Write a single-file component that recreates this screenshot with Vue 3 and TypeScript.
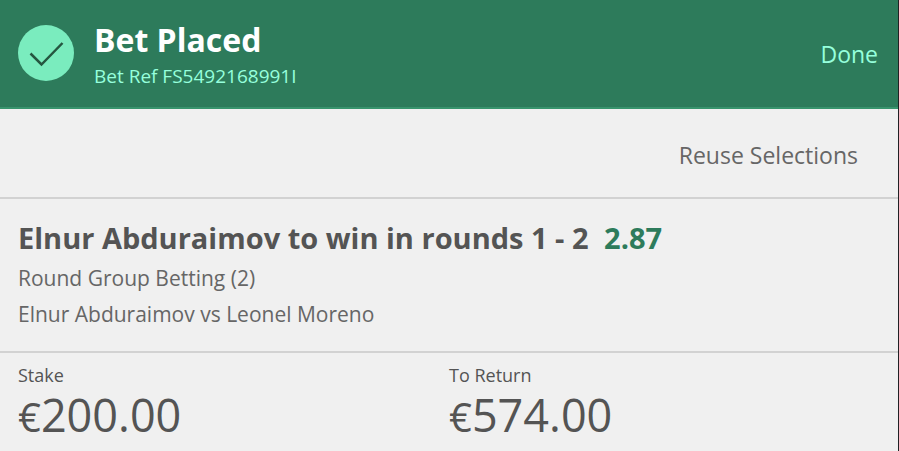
<script setup lang="ts">
interface Total {
  label: string
  currency: string
  amount: string
}

const reference = 'FS5492168991I'
const totals: Total[] = [
  { label: 'Stake', currency: '€', amount: '200.00' },
  { label: 'To Return', currency: '€', amount: '574.00' },
]
</script>

<template>
  <main class="receipt">
    <header class="banner">
      <svg class="tick" viewBox="0 0 56 56" aria-hidden="true">
        <circle cx="28" cy="28" r="28" fill="#7aecbe" />
        <path d="M12.500 28.500L23.500 39.500L44.500 18" fill="none" stroke="#255640" stroke-width="2.500" />
      </svg>
      <div class="heading">
        <h1>Bet Placed</h1>
        <p>Bet Ref {{ reference }}</p>
      </div>
      <button class="done" type="button">Done</button>
    </header>
    <div class="actions">
      <button class="reuse" type="button">Reuse Selections</button>
    </div>
    <section class="selection">
      <h2>Elnur Abduraimov to win in rounds 1 - 2 <span class="odds">2.87</span></h2>
      <p>Round Group Betting (2)</p>
      <p>Elnur Abduraimov vs Leonel Moreno</p>
    </section>
    <dl class="totals">
      <div v-for="total in totals" :key="total.label">
        <dt>{{ total.label }}</dt>
        <dd><span class="currency">{{ total.currency }}</span>{{ total.amount }}</dd>
      </div>
    </dl>
  </main>
</template>

<style>
body {
  background: #f0f0f0;
}
</style>

<style scoped>
.receipt {
  box-sizing: border-box;
  min-height: 100vh;
  border-right: 1px solid #202124;
  font-family: "Open Sans", "Noto Sans", sans-serif;
  color: #545454;
}
h1, h2, p, dl, dt, dd {
  margin: 0;
}
button {
  border: 0;
  padding: 0;
  background: none;
  font: inherit;
  cursor: pointer;
}
.banner {
  display: flex;
  align-items: center;
  box-sizing: border-box;
  height: 109px;
  padding: 0 20px 1px 18px;
  background: #2d7b5b;
  border-bottom: 2px solid #38946d;
}
.tick {
  width: 56px;
  height: 56px;
  margin-right: 20px;
}
.heading {
  flex: 1;
  padding-top: 6px;
}
h1 {
  color: #fff;
  font-size: 32px;
  line-height: 40px;
}
.heading p {
  color: #96ffdc;
  font-size: 19px;
  line-height: 32px;
}
.done {
  padding-top: 2px;
  color: #96ffdc;
  font-size: 23px;
}
.actions {
  display: flex;
  justify-content: flex-end;
  align-items: center;
  height: 88px;
  padding: 4px 40px 0 18px;
  box-sizing: border-box;
}
.reuse {
  color: #666;
  font-size: 23px;
}
.selection {
  padding: 19px 18px;
  border: solid #d2d2d2;
  border-width: 2px 0;
}
h2 {
  margin-bottom: 2px;
  font-size: 29px;
  line-height: 40px;
}
.odds {
  margin-left: 8px;
  color: #2d7b5b;
}
.selection p {
  color: #666;
  font-size: 21px;
  line-height: 36px;
}
.totals {
  display: grid;
  grid-template-columns: 1fr 1fr;
  padding: 8px 18px 0;
}
dt {
  font-size: 18px;
  line-height: 28px;
}
dd {
  font-size: 45px;
  line-height: 52px;
}
.currency {
  font-size: 40px;
}
</style>
